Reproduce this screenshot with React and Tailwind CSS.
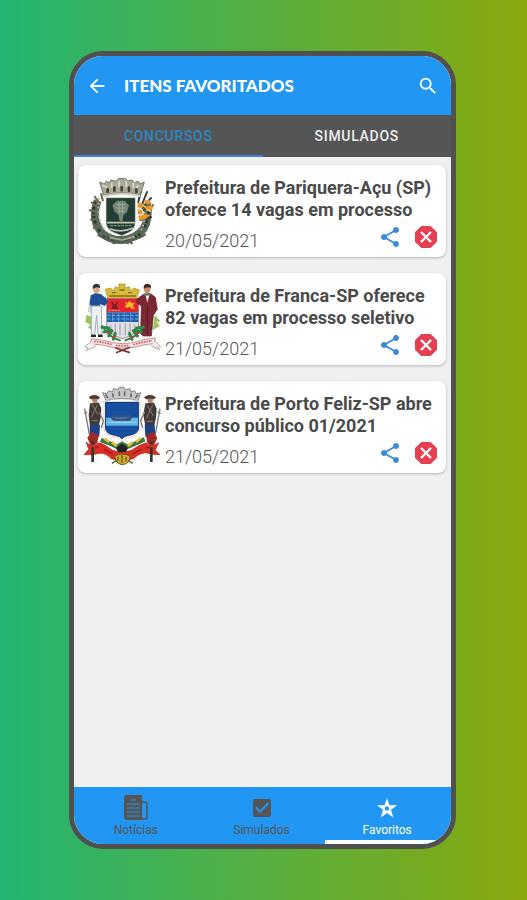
import React, { useState } from 'react';
import { MdArrowBack, MdSearch, MdShare, MdCheckBox } from 'react-icons/md';
import clsx from 'clsx';

const PariqueraCrest = () => (
  <svg viewBox="0 0 255 255" className="h-[85px] w-[85px] shrink-0" role="img" aria-label="Brasão de Pariquera-Açu">
    <g transform="translate(-3 9)">
      {/* wreath */}
      <path d="M56 92 Q34 150 70 190 Q96 212 128 210 Q170 208 194 176 Q212 146 204 100" fill="none" stroke="#5d6b5c" strokeWidth="24" />
      <path d="M48 96 Q34 150 66 188 M196 172 Q214 140 206 108 M70 198 Q126 226 184 192" fill="none" stroke="#2b3a2e" strokeWidth="9" strokeDasharray="9 5" />
      <path d="M60 84 Q52 150 80 184 M186 180 Q198 160 196 120" fill="none" stroke="#b9bba5" strokeWidth="6" strokeDasharray="5 8" />
      <path d="M36 96 l18 14 M30 120 l20 6 M46 78 l14 20 M66 70 l6 24 M34 150 l18 -4 M42 176 l16 -10" stroke="#6e6a50" strokeWidth="6" />
      <path d="M186 62 l-8 34 M204 66 l-16 40 M216 84 l-26 30 M222 106 l-28 14 M184 150 l32 -8" stroke="#39403a" strokeWidth="6" strokeLinecap="round" />
      <path d="M178 98 l16 4 -4 12 -16 -2z M196 92 l14 -4 6 12 -14 4z M176 118 l14 2 0 12 -14 2z M196 112 l24 -8 2 12 -18 8z M178 138 l22 -6 14 4 -16 12 -18 4z" fill="#e8982c" />
      <path d="M190 106 l10 4 M204 120 l12 4" stroke="#f7c85c" strokeWidth="5" />
      {/* mural crown */}
      <path d="M62 36 L76 42 82 34 92 38 96 30 112 34 118 26 140 26 146 33 160 30 166 38 178 34 184 42 196 36 184 74 Q128 62 74 76z" fill="#aaa998" stroke="#74746a" strokeWidth="3" />
      <path d="M70 46 l14 6 M98 38 v16 M120 32 v20 M142 32 v20 M164 38 l-2 16 M178 46 l-8 12" stroke="#deddca" strokeWidth="5" />
      <path d="M86 66 v-8 M106 62 v-9 M128 61 v-9 M150 62 v-9 M172 66 v-8" stroke="#3f433c" strokeWidth="8" strokeLinecap="round" />
      <path d="M74 79 Q128 66 184 78" fill="none" stroke="#d4d3be" strokeWidth="6" />
      {/* shield */}
      <path d="M82 84 H168 V158 Q166 180 146 188 L128 196 108 188 Q84 180 82 158z" fill="#233d32" stroke="#5f7263" strokeWidth="2" />
      <path d="M114 92 h22 l14 14 -6 20 -10 8 -4 20 h-8 l-4 -20 -12 -10 -6 -18z" fill="#718573" />
      <path d="M112 104 h30 M112 114 h30 M116 124 h20 M120 96 v34 M130 96 v34" stroke="#adb9a8" strokeWidth="2" />
      <path d="M84 158 H168 M92 176 Q128 190 162 174" fill="none" stroke="#bfc8b5" strokeWidth="5" />
      <path d="M94 167 H158" stroke="#7f927e" strokeWidth="4" strokeDasharray="8 3" />
      <path d="M56 194 Q86 214 112 206 L102 222 M200 192 Q176 212 146 206 L160 222 M112 210 L150 220 M148 208 L104 218" fill="none" stroke="#555f50" strokeWidth="6" />
      <path d="M92 202 L128 210 168 200" fill="none" stroke="#a8ad98" strokeWidth="5" />
    </g>
  </svg>
);

const FrancaCrest = () => (
  <svg viewBox="0 0 255 255" className="h-[85px] w-[85px] shrink-0" role="img" aria-label="Brasão de Franca">
    <g transform="translate(0 9)">
      <path d="M20 110 l22 10 0 42 -18 -14 8 -8 -16 -8z M224 112 l18 18 -12 2 10 12 -22 12z" fill="#9cc45a" />
      {/* crown */}
      <path d="M76 34 l16 -4 8 8 6 -12 12 4 -2 -12 20 0 -2 12 14 -4 4 12 10 -8 16 6 -10 28 H84z" fill="#d8bb3a" stroke="#a98b21" strokeWidth="2" />
      <path d="M88 54 H168 M96 44 h12 M118 36 h16 M144 44 h12" stroke="#866f1d" strokeWidth="4" />
      {/* shield */}
      <path d="M80 62 H176 V142 Q174 170 128 182 Q82 170 80 142z" fill="#dfe0e6" stroke="#8f8f99" strokeWidth="3" />
      <path d="M81 62 H175 V103 H81z" fill="#e3262c" />
      <path d="M81 103 H175 V132 H81z" fill="#1d62b5" />
      <path d="M92 72 h8 v6 h8 v-6 h6 l-4 10 6 12 h-22 l4 -12z" fill="#7d2028" />
      <path d="M134 70 l8 6 8 -8 4 8 10 -2 -6 10 8 8 -12 0 -4 -6 -10 4 -6 -6 6 -4z" fill="#f3bd25" />
      <path d="M86 97 H122" stroke="#f5a09b" strokeWidth="3" strokeDasharray="6 3" />
      <path d="M82 112 H174 M82 123 H174" stroke="#b6d5ee" strokeWidth="2" strokeDasharray="9 5" />
      <path d="M98 104 V131 M116 104 V131 M134 104 V131 M152 104 V131" stroke="#7fb0de" strokeWidth="2" />
      <path d="M92 140 V156 M106 136 V166 M120 136 V172 M136 136 V172 M150 136 V166 M164 140 V156" stroke="#b0a7b4" strokeWidth="4" />
      {/* left figure */}
      <path d="M39 34 Q39 20 50 20 Q60 21 59 34 Q58 46 50 47 Q40 46 39 34z" fill="#d9ab8c" />
      <path d="M38 33 Q36 18 50 17 Q62 18 60 30 Q48 24 38 33z" fill="#35302f" />
      <path d="M32 52 L46 46 62 48 78 60 84 72 74 84 60 78 62 86 34 86 28 80z" fill="#1f4f97" />
      <path d="M34 84 H64 L66 170 54 170 50 112 44 170 34 170z" fill="#eef1f4" stroke="#a2acb5" strokeWidth="3" />
      <path d="M30 78 l-6 22 10 4z" fill="#e8eaee" stroke="#a2acb5" strokeWidth="2" />
      <path d="M34 170 h14 v7 h-16z M54 170 h14 v7 h-14z" fill="#2a2525" />
      {/* right figure */}
      <path d="M192 33 Q192 20 202 20 Q213 21 212 34 Q210 46 202 47 Q193 46 192 33z" fill="#c98e72" />
      <path d="M191 32 Q190 17 202 17 Q215 18 213 30 Q202 24 191 32z" fill="#3b2a28" />
      <path d="M172 62 L192 48 212 47 226 58 232 94 220 112 214 174 190 174 182 168 184 84 170 74z" fill="#7c2834" stroke="#5a1b27" strokeWidth="2" />
      <path d="M196 48 L202 74 209 48z" fill="#f0eeec" />
      <path d="M202 82 V168" stroke="#4f1823" strokeWidth="3" />
      <path d="M190 50 h22" stroke="#3f8652" strokeWidth="5" />
      {/* branches */}
      <path d="M66 142 Q82 176 122 188 M190 142 Q176 176 134 188" fill="none" stroke="#2c7a3f" strokeWidth="5" />
      <path d="M66 148 l20 2 M72 162 l20 -6 M86 174 l10 -16 M100 184 l6 -18 M190 148 l-20 2 M184 162 l-18 -6 M172 174 l-12 -16 M156 184 l-8 -18" stroke="#2f8747" strokeWidth="9" strokeLinecap="round" />
      <path d="M82 164 h4 M100 176 h4 M154 176 h4 M172 164 h4" stroke="#d5323a" strokeWidth="6" strokeLinecap="round" />
      {/* ribbon */}
      <path d="M34 182 Q74 186 98 194 Q128 200 158 194 Q188 184 226 180 L224 196 Q190 200 160 208 Q128 212 96 208 Q64 198 32 198z" fill="#f4e7e7" stroke="#c98e91" strokeWidth="3" />
      <path d="M32 192 L14 206 24 210 18 218 48 204 M226 190 L242 206 232 208 240 216 212 202" fill="#f1f1f1" stroke="#b3acac" strokeWidth="3" />
      <path d="M42 190 Q70 192 96 200 M108 203 H148 M160 200 Q188 192 216 188" fill="none" stroke="#d2535b" strokeWidth="5" strokeDasharray="5 3" />
      <path d="M106 210 L150 224 M150 208 L108 224" stroke="#7a3338" strokeWidth="5" />
    </g>
  </svg>
);

const PortoFelizCrest = () => (
  <svg viewBox="0 0 255 255" className="h-[85px] w-[85px] shrink-0" role="img" aria-label="Brasão de Porto Feliz">
    <g transform="translate(0 5)">
      {/* crown */}
      <path d="M68 24 l12 4 6 -10 12 4 2 -10 14 3 4 -7 14 0 4 7 14 -3 2 10 12 -4 6 10 12 -4 -8 24 Q126 34 78 48z" fill="#c8c8c8" stroke="#858585" strokeWidth="3" />
      <path d="M76 30 l8 10 M98 26 l2 12 M118 20 v14 M134 20 v14 M154 26 l-2 12 M174 30 l-8 10" stroke="#696969" strokeWidth="5" />
      {/* shield */}
      <path d="M72 50 Q126 36 180 50 V132 Q178 152 146 158 Q134 160 126 170 Q118 160 106 158 Q74 152 72 132z" fill="#fff" stroke="#b9b9b9" strokeWidth="2" />
      <path d="M77 53 H175 V134 Q172 148 146 152 Q132 154 126 162 Q120 154 106 152 Q80 148 77 134z" fill="#164fa0" stroke="#0e2f69" strokeWidth="3" />
      <path d="M78 99 H174 V123 H78z" fill="#62b4e8" />
      <path d="M90 98 Q126 106 158 96 L150 108 H100z" fill="#3e4c65" />
      <path d="M96 94 H152" stroke="#55546b" strokeWidth="5" strokeDasharray="5 3" />
      <path d="M82 113 H170" stroke="#a2d6f2" strokeWidth="3" />
      {/* left guardsman */}
      <path d="M26 38 Q42 24 60 38 L56 44 H32z" fill="#4b3a31" />
      <path d="M36 42 H52 V54 H38z" fill="#b57e60" />
      <path d="M30 56 L56 54 64 70 62 100 56 124 30 124 26 90z" fill="#3f3938" />
      <path d="M36 58 L54 90 M52 60 L34 98 M36 108 h18" stroke="#8d7b6b" strokeWidth="3" />
      <path d="M30 120 H60 L58 156 H28z" fill="#1c4189" />
      <path d="M14 72 L30 160 M12 86 l10 -4" stroke="#777" strokeWidth="4" />
      <path d="M58 82 l12 26 -6 22" fill="none" stroke="#84786c" strokeWidth="4" />
      {/* right guardsman */}
      <path d="M192 38 Q210 24 228 38 L222 44 H198z" fill="#4b3a31" />
      <path d="M202 42 H218 V54 H204z" fill="#b57e60" />
      <path d="M196 56 L222 54 230 72 228 100 222 124 196 124 190 90z" fill="#3f3938" />
      <path d="M200 60 L220 94 M218 60 L200 100 M200 110 h20" stroke="#8d7b6b" strokeWidth="3" />
      <path d="M194 120 H224 L226 156 H196z" fill="#1c4189" />
      <path d="M240 72 L224 160 M242 86 l-10 -4" stroke="#777" strokeWidth="4" />
      <path d="M194 82 l-12 26 6 22" fill="none" stroke="#84786c" strokeWidth="4" />
      {/* foliage and ribbon */}
      <path d="M22 160 l12 -18 22 8 -4 26 -18 10z M232 160 l-12 -18 -22 8 4 26 18 10z" fill="#9d2926" />
      <path d="M62 166 L88 176 110 186 126 178 144 186 168 176 194 164" fill="none" stroke="#3b7a43" strokeWidth="13" />
      <path d="M74 162 l14 10 M96 172 l14 12 M182 160 l-14 12 M158 172 l-14 12" stroke="#e5c13c" strokeWidth="8" />
      <path d="M18 172 Q36 190 58 174 Q74 178 96 196 Q126 208 156 196 Q178 180 198 174 Q214 190 236 174 L226 196 240 210 Q216 210 196 204 Q176 206 160 222 Q126 232 94 222 Q76 204 58 206 Q36 212 12 210 L26 194z" fill="#d92f26" stroke="#aa2420" strokeWidth="2" />
      <path d="M108 190 l18 -14 18 14 -6 12 h-24z" fill="#222" />
      <path d="M72 194 L98 208 M158 208 L184 194 M44 190 l12 -4 M198 190 l12 -4" stroke="#a71d1b" strokeWidth="5" />
      <path d="M104 214 Q126 202 150 214 Q150 238 126 240 Q106 236 104 214z" fill="#d8a928" stroke="#66551d" strokeWidth="3" />
      <path d="M114 216 v14 M126 212 v22 M138 216 v14 M96 236 l12 -8 M158 236 l-12 -8" stroke="#4f652a" strokeWidth="4" />
      <path d="M38 170 V232 M214 170 V232" stroke="#3c322e" strokeWidth="8" />
      <path d="M34 184 h10 M210 184 h10" stroke="#d92f26" strokeWidth="8" />
    </g>
  </svg>
);

const NewspaperIcon = () => (
  <svg viewBox="0 0 24 26" className="h-[26px] w-6" aria-hidden="true">
    <path d="M2 0H18V23Q18 25 20 25H3Q0 25 0 22V2Q0 0 2 0z" fill="currentColor" />
    <path d="M18 7H21Q23 7 23 9V22Q23 24 20 24Q18 24 18 22" fill="none" stroke="currentColor" strokeWidth="1.6" />
    <path d="M6 5H12M3 9H16M3 13H16M3 17H16M3 21H16" stroke="#2196f3" strokeWidth="1" />
  </svg>
);

const StarIcon = () => (
  <svg viewBox="0 0 20 20" className="h-5 w-5" aria-hidden="true">
    <path d="M10 0 12.5 7.2H20L14 11.8 16.3 19.4 10 15 3.7 19.4 6 11.8 0 7.2H7.5z" fill="currentColor" />
    <path d="M10 8 12.4 9.8 11.5 12.6H8.5L7.6 9.8z" fill="#2196f3" />
  </svg>
);

const RemoveIcon = () => (
  <svg viewBox="0 0 24 24" className="h-6 w-6" aria-hidden="true">
    <path d="M7.3 1H16.7L23 7.3V16.7L16.7 23H7.3L1 16.7V7.3z" fill="#e43f52" />
    <path d="M7 7 17 17M17 7 7 17" stroke="#fff" strokeWidth="2.4" />
  </svg>
);

const favorites = [
  { id: 1, title: 'Prefeitura de Pariquera-Açu (SP) oferece 14 vagas em processo', date: '20/05/2021', Crest: PariqueraCrest },
  { id: 2, title: 'Prefeitura de Franca-SP oferece 82 vagas em processo seletivo', date: '21/05/2021', Crest: FrancaCrest },
  { id: 3, title: 'Prefeitura de Porto Feliz-SP abre concurso público 01/2021', date: '21/05/2021', Crest: PortoFelizCrest },
];

const tabs = ['Concursos', 'Simulados'];

const navItems = [
  { label: 'Notícias', icon: <NewspaperIcon /> },
  { label: 'Simulados', icon: <MdCheckBox size={24} /> },
  { label: 'Favoritos', icon: <StarIcon /> },
];

const FavoriteCard = ({ item }) => {
  const { Crest } = item;
  return (
    <article className="flex rounded-lg bg-white pt-0.5 pb-1 pl-0.5 shadow-[0_1px_3px_rgba(0,0,0,0.25)]">
      <Crest />
      <div className="min-w-0 flex-1 pt-2.5">
        <h2 className="pr-2 text-lg/[22px] font-bold text-[#4a4a4a]">{item.title}</h2>
        <div className="flex items-center justify-between pr-2">
          <time className="pt-2 text-lg/6 font-light text-[#555]">{item.date}</time>
          <div className="flex items-center gap-3">
            <button type="button" aria-label="Compartilhar" className="text-[#3a89dc]">
              <MdShare size={24} />
            </button>
            <button type="button" aria-label="Remover dos favoritos">
              <RemoveIcon />
            </button>
          </div>
        </div>
      </div>
    </article>
  );
};

const App = () => {
  const [tab, setTab] = useState('Concursos');
  const [page, setPage] = useState('Favoritos');

  return (
    <div className="flex min-h-screen bg-linear-to-r/srgb from-[#22b573] to-[#8aa80c] py-[51px] pr-[71px] pl-[69px] font-['Roboto',sans-serif]">
      <main className="flex flex-1 flex-col overflow-hidden rounded-[34px] border-5 border-[#505050] bg-[#f0f0f0]">
        <header className="flex h-[59px] items-center bg-[#2196f3] px-3 text-white">
          <button type="button" aria-label="Voltar">
            <MdArrowBack size={22} />
          </button>
          <h1 className="flex-1 pl-4 font-['Lato',sans-serif] text-[17px] font-black">ITENS FAVORITADOS</h1>
          <button type="button" aria-label="Pesquisar">
            <MdSearch size={22} />
          </button>
        </header>

        <div role="tablist" className="flex h-[42px] bg-[#555]">
          {tabs.map((t) => (
            <button
              key={t}
              type="button"
              role="tab"
              aria-selected={tab === t}
              onClick={() => setTab(t)}
              className={clsx(
                'flex-1 border-b-2 pt-0.5 text-sm font-medium tracking-wider uppercase',
                tab === t ? 'border-[#3b82e0] text-[#2b86c5]' : 'border-transparent text-[#eee]'
              )}
            >
              {t}
            </button>
          ))}
        </div>

        <section className="flex flex-1 flex-col gap-4 pt-2 pr-[5px] pl-1">
          {favorites.map((item) => (
            <FavoriteCard key={item.id} item={item} />
          ))}
        </section>

        <nav className="flex h-[57px] bg-[#2196f3]">
          {navItems.map(({ label, icon }) => (
            <button
              key={label}
              type="button"
              onClick={() => setPage(label)}
              className={clsx(
                'flex flex-1 flex-col items-center border-b-4 pt-2 pr-0.5 text-xs/[18px]',
                page === label ? 'border-white text-white' : 'border-transparent text-[#555]'
              )}
            >
              <span className="flex h-[26px] items-center">{icon}</span>
              {label}
            </button>
          ))}
        </nav>
      </main>
    </div>
  );
};

export default App;
